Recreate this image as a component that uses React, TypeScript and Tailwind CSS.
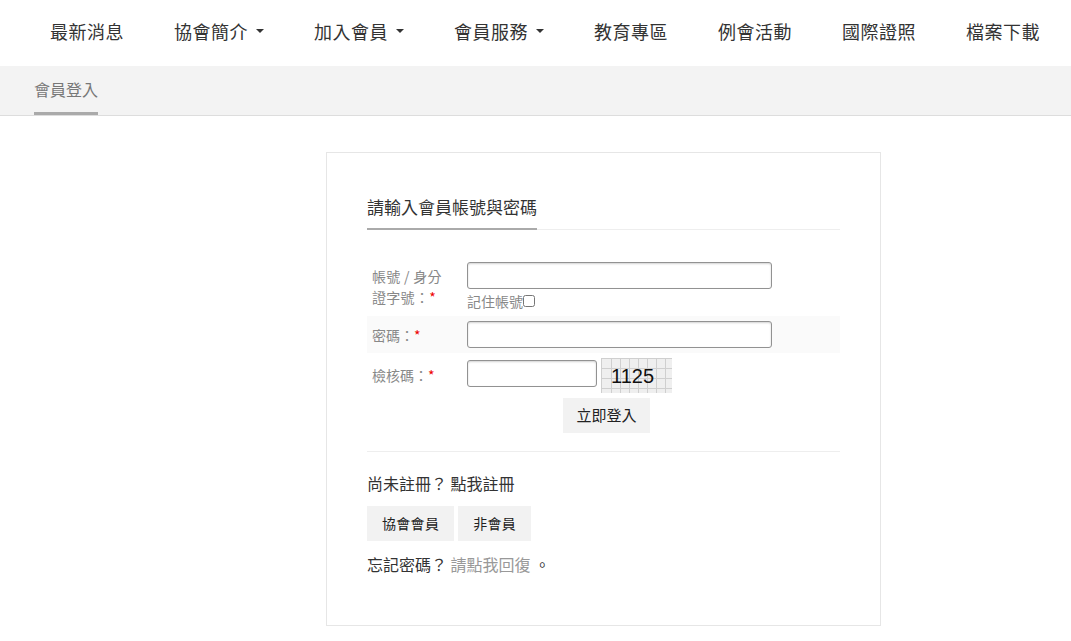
import React from "react";

function Caret() {
  return (
    <span className="ml-[8px] inline-block h-0 w-0 border-x-[4px] border-t-[4px] border-x-transparent border-t-[#333]" />
  );
}

const navItems: { label: string; caret?: boolean }[] = [
  { label: "最新消息" },
  { label: "協會簡介", caret: true },
  { label: "加入會員", caret: true },
  { label: "會員服務", caret: true },
  { label: "教育專區" },
  { label: "例會活動" },
  { label: "國際證照" },
  { label: "檔案下載" },
];

function Captcha() {
  const vs = [0, 10, 19, 28, 37, 46, 55, 64];
  const hs = [0, 10, 20, 30];
  return (
    <svg width="71" height="35" viewBox="0 0 71 35" className="block">
      <rect x="0" y="0" width="71" height="35" fill="#efefef" />
      {vs.map((x) => (
        <line key={"v" + x} x1={x + 0.5} y1="0" x2={x + 0.5} y2="35" stroke="#cfcfcf" strokeWidth="1" />
      ))}
      {hs.map((y) => (
        <line key={"h" + y} x1="0" y1={y + 0.5} x2="71" y2={y + 0.5} stroke="#cfcfcf" strokeWidth="1" />
      ))}
      <text x="10" y="25" fontFamily="'Liberation Sans', Arial, sans-serif" fontSize="20" fill="#111">
        1125
      </text>
    </svg>
  );
}

const inputCls =
  "block h-[27px] rounded-[3px] border border-[#929292] bg-white shadow-[inset_0_1px_2px_rgba(0,0,0,0.18)] outline-none";

export default function App() {
  return (
    <div className="min-h-[641px] bg-white font-['Noto_Sans_CJK_TC','Noto_Sans',sans-serif] text-[#333]">
      <nav className="flex h-[66px] items-center pb-[4px] pl-[25px]">
        {navItems.map((it) => (
          <div
            key={it.label}
            className="flex items-center px-[25px] text-[18px] leading-[24px] tracking-[0.5px] text-[#333]"
          >
            <span>{it.label}</span>
            {it.caret && <Caret />}
          </div>
        ))}
      </nav>

      <div className="flex h-[50px] border-b border-[#ddd] bg-[#f3f3f3] px-[34px]">
        <div className="flex h-full items-center border-b-[3px] border-[#aaa] text-[16px] text-[#777]">
          會員登入
        </div>
      </div>

      <div className="ml-[326px] mt-[36px] w-[555px] border border-[#e6e6e6] bg-white px-[40px] pb-[49px] pt-[40px]">
        <div className="border-b border-[#eee]">
          <span className="-mb-px inline-block border-b-2 border-[#aaa] pb-[7px] text-[17px] leading-[28px] text-[#333]">
            請輸入會員帳號與密碼
          </span>
        </div>

        <div className="mt-[27px]">
          <div className="flex items-start py-[5px]">
            <div className="w-[100px] shrink-0 pl-[5px] pt-[4px] text-[14px] leading-[21px] tracking-[0.3px] text-[#888]">
              帳號 / 身分
              <br />
              證字號：<span className="text-[#e00]">*</span>
            </div>
            <div>
              <input className={inputCls + " w-[305px]"} />
              <div className="mt-[2px] flex items-center text-[14px] leading-[20px] text-[#888]">
                記住帳號
                <input type="checkbox" className="m-0 h-[12px] w-[12px]" />
              </div>
            </div>
          </div>

          <div className="flex items-start bg-[#fafafa] py-[5px]">
            <div className="w-[100px] shrink-0 pl-[5px] pt-[4px] text-[14px] leading-[21px] text-[#888]">
              密碼：<span className="text-[#e00]">*</span>
            </div>
            <input type="password" className={inputCls + " w-[305px]"} />
          </div>

          <div className="flex items-start py-[5px]">
            <div className="w-[100px] shrink-0 pl-[5px] pt-[7px] text-[14px] leading-[21px] text-[#888]">
              檢核碼：<span className="text-[#e00]">*</span>
            </div>
            <input className={inputCls + " mt-[2px] w-[130px]"} />
            <div className="ml-[4px]">
              <Captcha />
            </div>
          </div>

          <div className="flex justify-center pl-[6px]">
            <button className="h-[35px] w-[87px] bg-[#f2f2f2] text-[15px] text-[#222]">立即登入</button>
          </div>
        </div>

        <div className="mt-[18px] border-t border-[#eee]" />

        <p className="mt-[19px] text-[16px] leading-[24px] text-[#333]">尚未註冊？ 點我註冊</p>

        <div className="mt-[11px] flex gap-[4px]">
          <button className="h-[35px] bg-[#f2f2f2] px-[15px] text-[14px] tracking-[0.3px] text-[#222]">協會會員</button>
          <button className="h-[35px] bg-[#f2f2f2] px-[15px] text-[14px] tracking-[0.3px] text-[#222]">非會員</button>
        </div>

        <p className="mt-[11px] text-[16px] leading-[24px] text-[#333]">
          忘記密碼？ <span className="text-[#999]">請點我回復</span> 。
        </p>
      </div>
    </div>
  );
}
